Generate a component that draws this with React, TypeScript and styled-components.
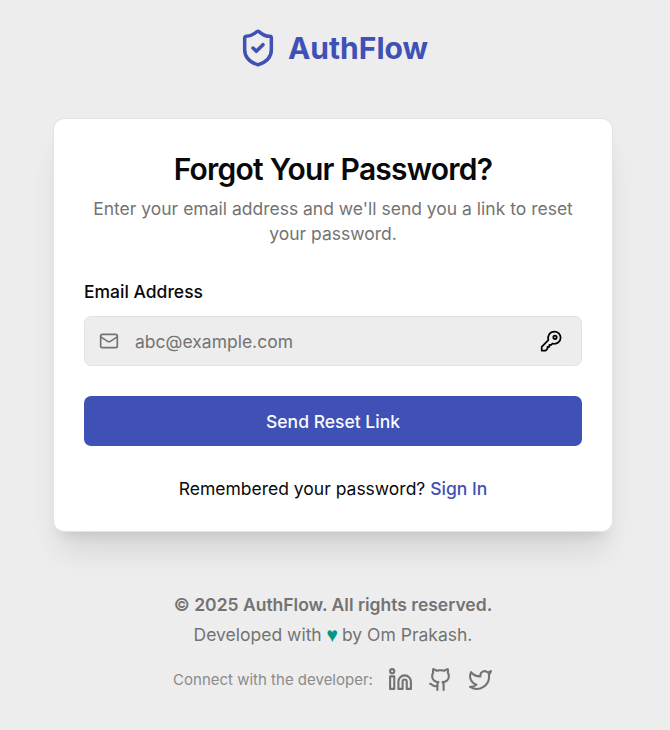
import React from "react";
import styled, { createGlobalStyle } from "styled-components";
import { ShieldCheck, Mail, Linkedin, Github, Twitter } from "lucide-react";

const GlobalStyle = createGlobalStyle`
  *, *::before, *::after { box-sizing: border-box; }
  body { margin: 0; background: #ededed; font-family: Inter, sans-serif; color: #09090b; }
  h1, p { margin: 0; }
`;

const Page = styled.main`
  display: flex;
  flex-direction: column;
  align-items: center;
  width: 100%;
  min-height: 730px;
  padding: 23px 58px 0 54px;
`;

const Brand = styled.header`
  display: flex;
  align-items: center;
  gap: 10px;
  height: 50px;
  color: #3f51b5;
  font-size: 30px;
  line-height: 50px;
  font-weight: 700;
`;

const Card = styled.section`
  width: 558px;
  height: 412px;
  margin-top: 46px;
  padding: 30px;
  border-radius: 10px;
  background: #fff;
  box-shadow: 0 0 0 1px #e4e4e4, 0 25px 31.25px -6.25px rgba(0, 0, 0, 0.1), 0 10px 12.5px -7.5px rgba(0, 0, 0, 0.1);
`;

const Title = styled.h1`
  text-align: center;
  font-size: 30px;
  line-height: 41px;
  font-weight: 600;
  letter-spacing: -0.75px;
`;

const Description = styled.p`
  margin-top: 6px;
  text-align: center;
  font-size: 17.5px;
  line-height: 25px;
  color: #737373;
`;

const Label = styled.label`
  display: block;
  margin-top: 33px;
  font-size: 17.5px;
  line-height: 25px;
  font-weight: 500;
`;

const Field = styled.div`
  display: flex;
  align-items: center;
  height: 50px;
  margin-top: 12px;
  padding: 0 19px 0 14px;
  border: 1px solid #e2e2e2;
  border-radius: 7px;
  background: #ededed;
  color: #737373;
`;

const Input = styled.input`
  flex: 1;
  min-width: 0;
  margin-left: 16px;
  padding: 0;
  border: 0;
  outline: 0;
  background: transparent;
  font: 400 17.5px/25px Inter, sans-serif;
  &::placeholder { color: #737373; opacity: 1; }
`;

const KeyIcon = styled.svg`
  display: block;
  width: 22px;
  height: 22px;
  fill: none;
  stroke: #000;
  stroke-width: 1.75;
  stroke-linejoin: round;
`;

const Submit = styled.button`
  display: block;
  width: 100%;
  height: 50px;
  margin-top: 30px;
  padding: 0;
  border: 0;
  border-radius: 7px;
  background: #3f51b5;
  color: #fafafa;
  font: 500 17.5px/25px Inter, sans-serif;
`;

const Prompt = styled.p`
  margin-top: 30px;
  text-align: center;
  font-size: 17.5px;
  line-height: 25px;
`;

const SignIn = styled.a`
  color: #3f51b5;
  font-weight: 500;
`;

const Footer = styled.footer`
  display: flex;
  flex-direction: column;
  align-items: center;
  margin-top: 59px;
  color: #737373;
  font-size: 17.5px;
  line-height: 30px;
`;

const Copyright = styled.p` font-weight: 600; `;
const Heart = styled.span`
  display: inline-block;
  color: #009688;
  font-family: "Liberation Sans", sans-serif;
  line-height: 20px;
  transform: scale(1.1, 1.2);
`;

const Connect = styled.div`
  display: flex;
  align-items: center;
  gap: 15px;
  height: 30px;
  margin-top: 15px;
  color: #8b8b8b;
  font-size: 15px;
`;

const Socials = styled.nav`
  display: flex;
  gap: 15px;
  margin-bottom: 2px;
  color: #737373;
`;

export default function App() {
  return (
    <Page>
      <GlobalStyle />
      <Brand><ShieldCheck size={40} strokeWidth={2.1} /><span>AuthFlow</span></Brand>
      <Card>
        <Title>Forgot Your Password?</Title>
        <Description>Enter your email address and we'll send you a link to reset your password.</Description>
        <Label htmlFor="email">Email Address</Label>
        <Field>
          <Mail size={20} />
          <Input id="email" placeholder="abc@example.com" />
          <KeyIcon viewBox="0 0 22 22" aria-hidden="true">
            <path d="M8.3 10.2C7.2 5.7 9.8 1.7 14.4 1.7c3.5 0 6.2 2.6 6.2 6 0 4.1-3.8 6.9-8.1 5.8l-1.2 1.4H9.4v1.9H7.5v1.8l-1.9 2H1.7v-3.8z" />
            <circle cx="15" cy="7.3" r="1.7" />
          </KeyIcon>
        </Field>
        <Submit>Send Reset Link</Submit>
        <Prompt>Remembered your password? <SignIn>Sign In</SignIn></Prompt>
      </Card>
      <Footer>
        <Copyright>© 2025 AuthFlow. All rights reserved.</Copyright>
        <p>Developed with <Heart>♥</Heart> by Om Prakash.</p>
        <Connect>
          <span>Connect with the developer:</span>
          <Socials><Linkedin size={25} /><Github size={25} /><Twitter size={25} /></Socials>
        </Connect>
      </Footer>
    </Page>
  );
}
